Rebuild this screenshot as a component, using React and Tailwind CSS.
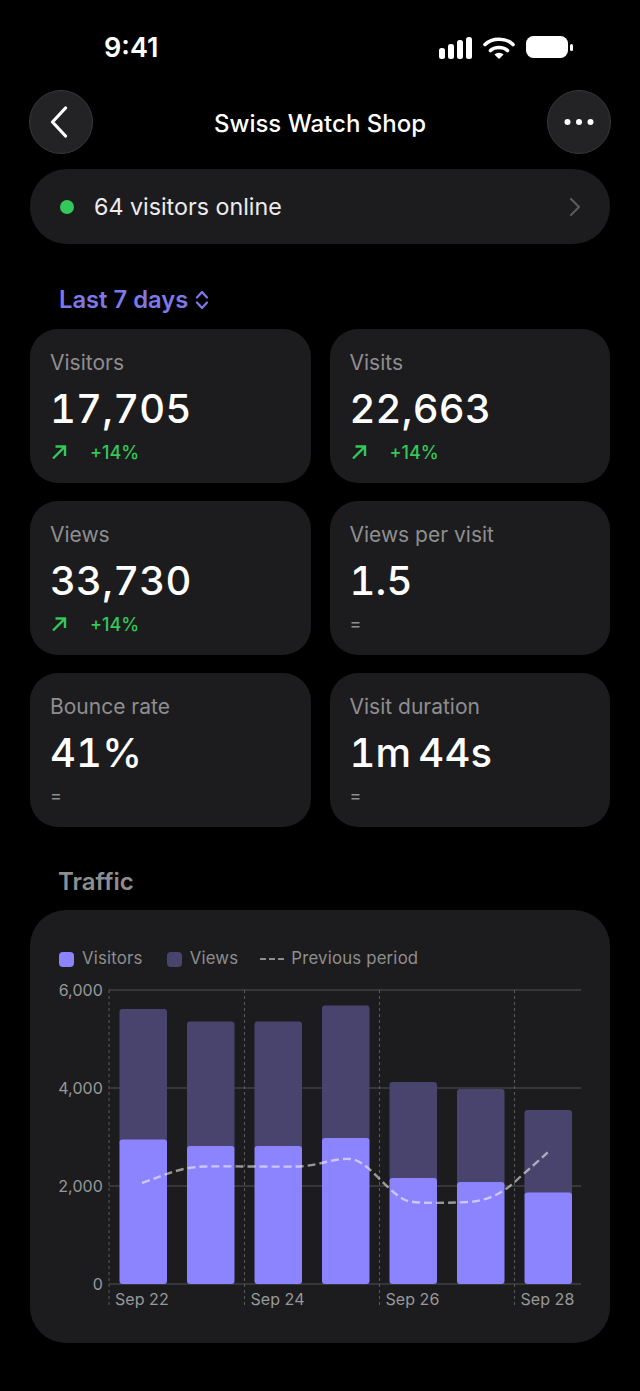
import React from "react";

const STATS = [
  { label: "Visitors", value: "17,705", delta: "+14%" },
  { label: "Visits", value: "22,663", delta: "+14%" },
  { label: "Views", value: "33,730", delta: "+14%" },
  { label: "Views per visit", value: "1.5" },
  { label: "Bounce rate", value: "41%" },
  { label: "Visit duration", value: "1m 44s" },
];

// x, top of visitors bar, top of views bar (page pixels)
const BARS = [
  [119.5, 1139.5, 1009],
  [187, 1146, 1021.5],
  [254.5, 1146, 1021.5],
  [322, 1138, 1005.5],
  [389.5, 1178, 1082],
  [457, 1182, 1089],
  [524.5, 1192.5, 1110],
];

const GRID = [
  { y: 990, label: "6,000" },
  { y: 1088, label: "4,000" },
  { y: 1186, label: "2,000" },
  { y: 1284, label: "0" },
];

const TICKS = [
  { x: 109, label: "Sep 22" },
  { x: 244.5, label: "Sep 24" },
  { x: 379.5, label: "Sep 26" },
  { x: 514.5, label: "Sep 28" },
];

function StatusBar() {
  return (
    <div className="flex h-[90px] items-start justify-between pl-[104px] pr-[67px] pt-[30px]">
      <span className="pt-[1px] text-[27px] leading-[34px] font-semibold text-white">9:41</span>
      <svg width="134" height="26" viewBox="0 0 134 26" className="mt-[4px]" fill="white">
        <rect x="0" y="14" width="6" height="11" rx="2.5" />
        <rect x="9" y="10" width="6" height="15" rx="2.5" />
        <rect x="18" y="6" width="6" height="19" rx="2.5" />
        <rect x="27" y="3" width="6" height="22" rx="2.5" />
        <path d="M46 10.5C53 3.5 67 3.5 74 10.5" fill="none" stroke="white" strokeWidth="3.6" strokeLinecap="round" />
        <path d="M51.5 16.5C55.5 12.5 64.5 12.5 68.5 16.5" fill="none" stroke="white" strokeWidth="3.6" strokeLinecap="round" />
        <path d="M60 25l-4.6-4.4a6.6 6.6 0 0 1 9.2 0z" />
        <rect x="87" y="2" width="42" height="22" rx="7.5" />
        <rect x="131" y="10" width="3" height="7" rx="1.5" />
      </svg>
    </div>
  );
}

function RoundButton({ children }) {
  return (
    <button className="flex h-16 w-16 items-center justify-center rounded-full border border-[#38383a] bg-[#232325] text-white">
      {children}
    </button>
  );
}

function StatCard({ label, value, delta }) {
  return (
    <div className="h-[154px] rounded-[28px] bg-[#1c1c1e] pl-[20px] pt-[19px]">
      <div className="text-[21px] leading-[30px] text-[#8e8e90]">{label}</div>
      <div className="mt-[6px] text-[40px] leading-[50px] font-medium tracking-[0.2px] [word-spacing:-4px] tabular-nums text-white">{value}</div>
      {delta ? (
        <div className="mt-[6px] flex h-[24px] items-center text-[#34c759]">
          <svg width="16" height="16" viewBox="0 0 16 16" fill="none" stroke="currentColor" strokeWidth="2.4" className="ml-[1px]">
            <path d="M2 14.5L14 2.5M4.5 2.5H14V12" />
          </svg>
          <span className="ml-[23px] text-[18px] font-medium">{delta}</span>
        </div>
      ) : (
        <div className="mt-[6px] h-[24px] text-[18px] leading-[24px] text-[#8e8e90]">=</div>
      )}
    </div>
  );
}

function TrafficChart() {
  return (
    <svg width="580" height="335" viewBox="30 980 580 335" className="block">
      {GRID.map((g) => (
        <g key={g.y}>
          <line x1="109" x2="581" y1={g.y} y2={g.y} stroke="#525254" strokeWidth="1" />
          <text x="103" y={g.y + 6} textAnchor="end" fontSize="16" fill="#98989a" letterSpacing="0.1">
            {g.label}
          </text>
        </g>
      ))}
      {TICKS.map((t) => (
        <g key={t.x}>
          <line x1={t.x} x2={t.x} y1="990" y2="1308" stroke="#5a5a5c" strokeDasharray="3 3" />
          <text x={t.x + 6} y="1305" fontSize="16" fill="#98989a" letterSpacing="0.05">
            {t.label}
          </text>
        </g>
      ))}
      {BARS.map(([x, top, viewsTop]) => (
        <g key={x}>
          <rect x={x} y={viewsTop} width="47.5" height={top - viewsTop + 6} rx="3" fill="#49446e" />
          <rect x={x} y={top} width="47.5" height={1284 - top} rx="3" fill="#8c84ff" />
        </g>
      ))}
      <path
        d="M142 1183 C165 1175 180 1167 205 1166.5 C235 1166 270 1167 300 1166.5 C320 1165 335 1158 350 1159 C368 1160 385 1190 405 1200 C415 1204 440 1203 470 1202 C490 1200 505 1192 520 1177 C530 1168 540 1160 548 1152"
        fill="none"
        stroke="#ffffff"
        strokeOpacity="0.55"
        strokeWidth="2.4"
        strokeDasharray="8 4"
      />
    </svg>
  );
}

export default function App() {
  return (
    <div className="h-[1391px] w-[640px] overflow-hidden bg-black font-['Inter',sans-serif]">
      <StatusBar />

      <div className="flex h-16 items-center justify-between pl-[29px] pr-[29px]">
        <RoundButton>
          <svg width="18" height="32" viewBox="0 0 18 32" fill="none" stroke="currentColor" strokeWidth="3.2" strokeLinecap="round" strokeLinejoin="round" className="-ml-[4px]">
            <path d="M15.5 2L2.5 16L15.5 30" />
          </svg>
        </RoundButton>
        <h1 className="mt-[3px] text-[24px] font-medium text-white">Swiss Watch Shop</h1>
        <RoundButton>
          <svg width="30" height="8" viewBox="0 0 30 8" fill="currentColor">
            <circle cx="3.5" cy="4" r="3" />
            <circle cx="15" cy="4" r="3" />
            <circle cx="26.5" cy="4" r="3" />
          </svg>
        </RoundButton>
      </div>

      <div className="mx-[30px] mt-[15px] flex h-[75px] items-center rounded-[37px] bg-[#1c1c1e] pl-[30px] pr-[29px]">
        <span className="h-[14px] w-[14px] rounded-full bg-[#34c759]" />
        <span className="ml-[20px] pt-[1px] text-[23.25px] text-[#ececee]">64 visitors online</span>
        <svg width="12" height="20" viewBox="0 0 12 20" fill="none" stroke="#5a5a5e" strokeWidth="2.2" strokeLinecap="round" strokeLinejoin="round" className="ml-auto">
          <path d="M2 2L10 10L2 18" />
        </svg>
      </div>

      <div className="ml-[59px] mt-[39px] flex h-[34px] items-center gap-[7px] text-[#7f78e8]">
        <span className="text-[23.75px] font-semibold">Last 7 days</span>
        <svg width="14" height="20" viewBox="0 0 14 20" fill="none" stroke="currentColor" strokeWidth="2.2" strokeLinecap="round" strokeLinejoin="round">
          <path d="M2 7.5L7 2L12 7.5M2 12.5L7 18L12 12.5" />
        </svg>
      </div>

      <div className="mx-[30px] mt-[12px] grid grid-cols-2 gap-x-[19px] gap-y-[18px]">
        {STATS.map((s) => (
          <StatCard key={s.label} {...s} />
        ))}
      </div>

      <h2 className="ml-[58px] mt-[39px] text-[24px] leading-[32px] font-semibold text-[#8e8e90]">Traffic</h2>

      <div className="mx-[30px] mt-[12px] h-[433px] rounded-[36px] bg-[#1c1c1e] pt-[38px]">
        <div className="flex h-[22px] items-center pl-[29px] text-[16.75px] tracking-[0.2px] text-[#8e8e90]">
          <span className="h-[15px] w-[15px] rounded-[4px] bg-[#8c84ff]" />
          <span className="ml-[8px]">Visitors</span>
          <span className="ml-[24px] h-[15px] w-[15px] rounded-[4px] bg-[#49446e]" />
          <span className="ml-[8px]">Views</span>
          <span className="ml-[22px] h-[2px] w-[24px] border-t-2 border-dashed border-[#8e8e90]" />
          <span className="ml-[7px]">Previous period</span>
        </div>
        <div className="mt-[10px]">
          <TrafficChart />
        </div>
      </div>
    </div>
  );
}
